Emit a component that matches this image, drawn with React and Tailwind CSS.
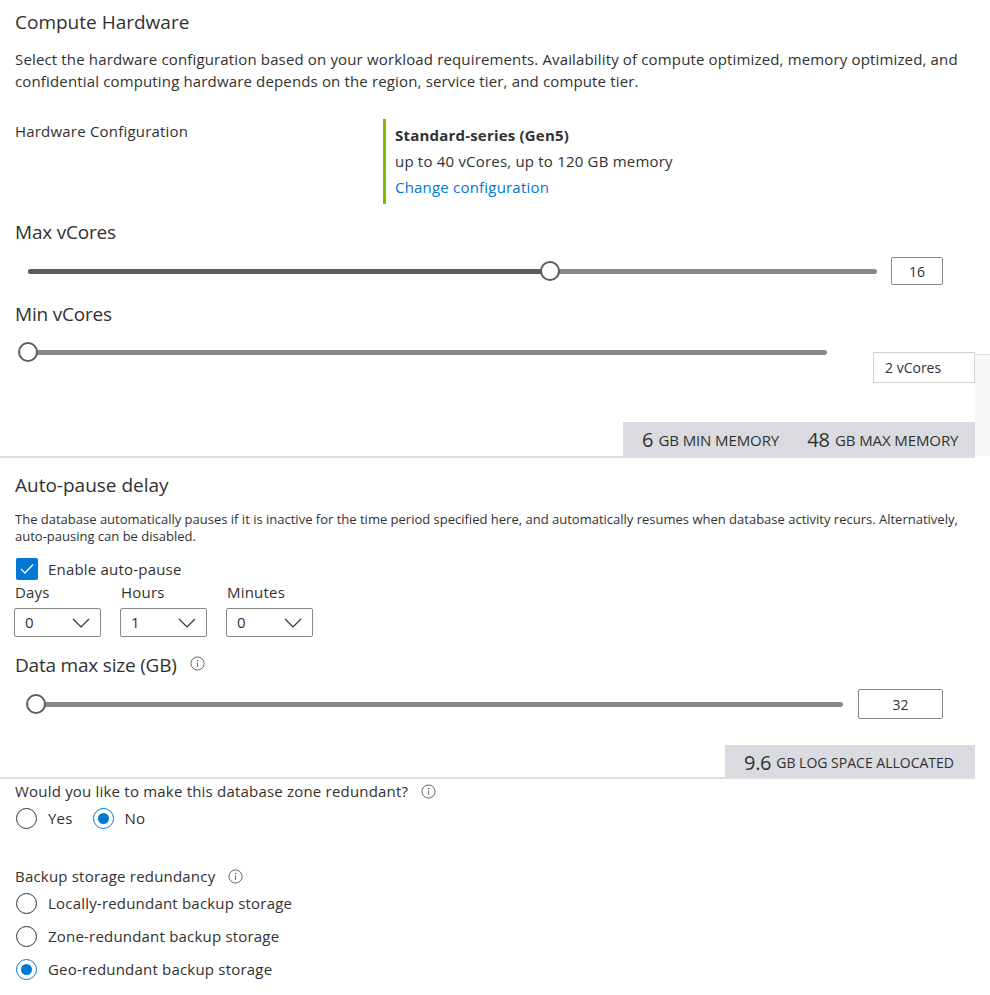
import React from "react";

function Slider({ pct, trackW, fill }) {
  return (
    <div className="relative h-[22px]" style={{ width: trackW }}>
      <div className="absolute left-0 right-0 top-[8.5px] h-[5px] rounded-full bg-[#8a8886]" />
      {fill ? (
        <div className="absolute left-0 top-[8.5px] h-[5px] rounded-full bg-[#5c5c5c]" style={{ width: `${pct}%` }} />
      ) : null}
      <div
        className="absolute top-px h-[20px] w-[20px] -translate-x-1/2 rounded-full border-2 border-[#5c5c5c] bg-white"
        style={{ left: `${pct}%` }}
      />
    </div>
  );
}

function Info() {
  return (
    <svg width="15" height="15" viewBox="0 0 16 16" className="text-[#605e5c]">
      <circle cx="8" cy="8" r="7" fill="none" stroke="currentColor" strokeWidth="1" />
      <line x1="8" y1="7" x2="8" y2="11.5" stroke="currentColor" strokeWidth="1" />
      <circle cx="8" cy="4.8" r="0.8" fill="currentColor" />
    </svg>
  );
}

function Radio({ checked, label }) {
  return (
    <div className="flex items-center">
      <div
        className={
          "flex h-[21px] w-[21px] items-center justify-center rounded-full border " +
          (checked ? "border-[#0078d4]" : "border-[#323130]")
        }
      >
        {checked ? <div className="h-[11px] w-[11px] rounded-full bg-[#0078d4]" /> : null}
      </div>
      <span className="ml-[11px] text-[15px] leading-[22px] tracking-[0.2px] text-[#323130]">{label}</span>
    </div>
  );
}

function Dropdown({ value }) {
  return (
    <div className="flex h-[29px] w-[87px] items-center justify-between rounded-[2px] border border-[#8a8886] pl-[10px] pr-[10px]">
      <span className="text-[15px] text-[#323130]">{value}</span>
      <svg width="18" height="10" viewBox="0 0 18 10">
        <polyline points="1,1 9,9 17,1" fill="none" stroke="#323130" strokeWidth="1.2" />
      </svg>
    </div>
  );
}

export default function App() {
  return (
    <div
      className="relative h-[995px] w-[990px] overflow-hidden bg-white text-[#323130]"
      style={{ fontFamily: '"Segoe UI", "Open Sans", "Noto Sans", sans-serif' }}
    >
      <div className="pl-[15px]">
        <div className="pt-[8px] text-[19px] leading-[28px]">Compute Hardware</div>
        <div className="mt-[12px] w-[970px] text-[15px] leading-[22px] tracking-[0.15px]">
          Select the hardware configuration based on your workload requirements. Availability of compute optimized, memory optimized, and
          <br />
          confidential computing hardware depends on the region, service tier, and compute tier.
        </div>
        <div className="mt-[27px] flex tracking-[0.2px]">
          <div className="w-[368px] pt-px text-[15px] leading-[22px]">Hardware Configuration</div>
          <div className="h-[85px] border-l-[3px] border-[#7fba00] pl-[9px] pt-[3px] text-[15px] leading-[26px]">
            <div className="font-bold">Standard-series (Gen5)</div>
            <div>up to 40 vCores, up to 120 GB memory</div>
            <div className="text-[#0078d4]">Change configuration</div>
          </div>
        </div>
      </div>

      {/* Max vCores */}
      <div className="mt-[15px] pl-[15px] text-[19px] leading-[26px] tracking-[-0.2px]">Max vCores</div>
      <div className="mt-[12px] flex items-center">
        <div className="ml-[28px]">
          <Slider pct={61.5} trackW={849} fill />
        </div>
        <div className="ml-[14px] flex h-[28px] w-[52px] items-center justify-center rounded-[2px] border border-[#8a8886] text-[14px]">
          16
        </div>
      </div>

      {/* Min vCores */}
      <div className="mt-[16px] pl-[15px] text-[19px] leading-[26px] tracking-[-0.2px]">Min vCores</div>
      <div className="flex">
        <div className="w-[975px]">
          <div className="flex items-start">
            <div className="ml-[28px] mt-[14px]">
              <Slider pct={0} trackW={799} />
            </div>
            <div className="ml-auto mt-[25px] flex h-[31px] w-[102px] items-center border border-[#d2d0ce] pl-[11px] text-[14px]">
              2 vCores
            </div>
          </div>
          <div className="mt-[39px] flex justify-end">
            <div className="flex h-[34px] w-[352px] items-center bg-[#d9dbe0] pl-[19px] pt-[2px] leading-none">
              <span className="text-[20px]">6</span>
              <span className="ml-[5px] text-[15px] tracking-[-0.1px]">GB MIN MEMORY</span>
              <span className="ml-[28px] text-[20px]">48</span>
              <span className="ml-[5px] text-[15px] tracking-[-0.1px]">GB MAX MEMORY</span>
            </div>
          </div>
        </div>
        <div className="mt-[27px] h-[102px] w-[15px] border-t border-[#e1dfdd] bg-[#f8f8f8]" />
      </div>
      <div className="h-[2px] w-[975px] bg-[#e1dfdd]" />

      {/* Auto-pause */}
      <div className="pl-[15px]">
        <div className="mt-[13px] text-[19px] leading-[28px]">Auto-pause delay</div>
        <div className="mt-[12px] w-[970px] text-[13px] leading-[17px]">
          The database automatically pauses if it is inactive for the time period specified here, and automatically resumes when database activity recurs. Alternatively,
          <br />
          auto-pausing can be disabled.
        </div>
        <div className="mt-[13px] flex items-center">
          <div className="ml-px flex h-[22px] w-[22px] items-center justify-center rounded-[2px] bg-[#0078d4]">
            <svg width="14" height="12" viewBox="0 0 14 12">
              <polyline points="1,6 5,10 13,1.5" fill="none" stroke="white" strokeWidth="1.3" />
            </svg>
          </div>
          <span className="ml-[10px] text-[15px] leading-[22px] tracking-[0.2px]">Enable auto-pause</span>
        </div>
        <div className="mt-px flex text-[15px] leading-[22px] tracking-[0.2px]">
          <div className="w-[106px]">Days</div>
          <div className="w-[106px]">Hours</div>
          <div>Minutes</div>
        </div>
        <div className="-ml-px mt-[5px] flex gap-[19px]">
          <Dropdown value="0" />
          <Dropdown value="1" />
          <Dropdown value="0" />
        </div>
      </div>

      {/* Data max size */}
      <div className="mt-[15px] flex items-center pl-[15px]">
        <span className="text-[19px] leading-[26px] tracking-[-0.2px]">Data max size (GB)</span>
        <span className="ml-[13px] -mt-[4px]">
          <Info />
        </span>
      </div>
      <div className="mt-[11px] flex items-center">
        <div className="ml-[36px]">
          <Slider pct={0} trackW={807} />
        </div>
        <div className="ml-[15px] flex h-[30px] w-[85px] items-center justify-center rounded-[2px] border border-[#8a8886] text-[14px]">
          32
        </div>
      </div>
      <div className="mt-[26px] flex w-[975px] justify-end">
        <div className="flex h-[32px] w-[250px] items-center bg-[#d9dbe0] pl-[19px] pt-[4px] leading-none">
          <span className="text-[20px] tracking-[-0.3px]">9.6</span>
          <span className="ml-[5px] text-[14px]">GB LOG SPACE ALLOCATED</span>
        </div>
      </div>
      <div className="h-[2px] w-[975px] bg-[#e1dfdd]" />

      {/* Zone redundant */}
      <div className="pl-[15px]">
        <div className="mt-px flex items-center text-[15px] leading-[22px] tracking-[0.2px]">
          <span>Would you like to make this database zone redundant?</span>
          <span className="ml-[13px] flex">
            <Info />
          </span>
        </div>
        <div className="mt-[5px] flex gap-[20px] pl-px">
          <Radio label="Yes" />
          <Radio checked label="No" />
        </div>

        <div className="mt-[36px] flex items-center text-[15px] leading-[22px] tracking-[0.2px]">
          <span>Backup storage redundancy</span>
          <span className="ml-[13px] flex">
            <Info />
          </span>
        </div>
        <div className="mt-[5px] flex flex-col gap-[11px] pl-px">
          <Radio label="Locally-redundant backup storage" />
          <Radio label="Zone-redundant backup storage" />
          <Radio checked label="Geo-redundant backup storage" />
        </div>
      </div>
    </div>
  );
}
